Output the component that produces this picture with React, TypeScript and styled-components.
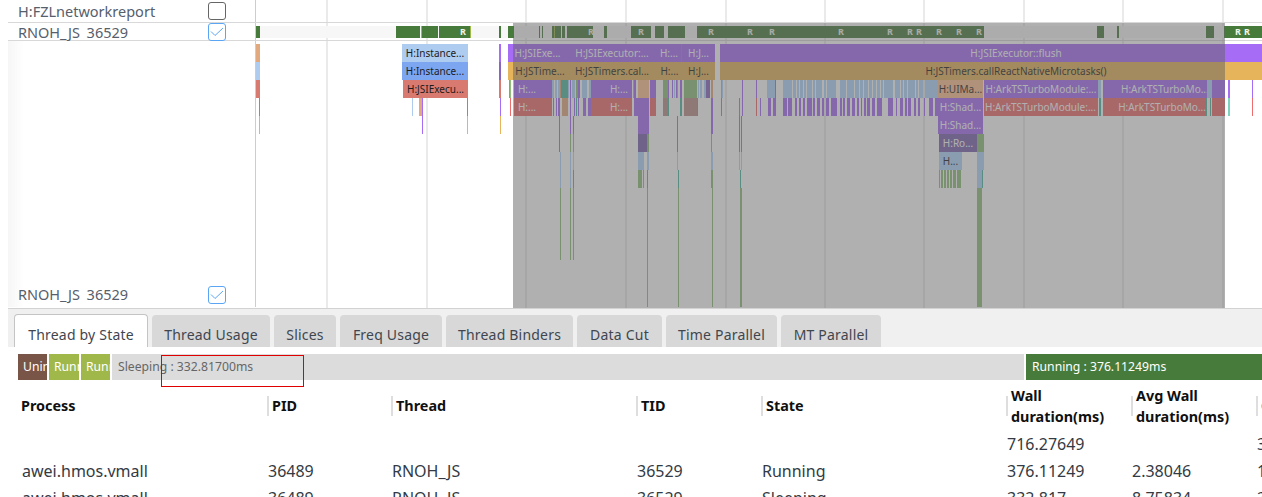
import React from "react";
import styled, { createGlobalStyle } from "styled-components";

const ORIGIN = 256;

const PURPLE = "#a66cf5";
const AMBER = "#e6b45a";
const SKY = "#aecbf0";
const BLUE = "#7ca6f0";
const RED = "#d97a70";
const ROSE = "#ee6c6c";
const PEACH = "#e2a97e";
const GREEN = "#8fbf78";
const TEAL = "#4fb8a0";
const MINT = "#7cd4bc";
const STEEL = "#b1d8ff";
const INDIGO = "#8a64c0";
const MOSS = "#b98f8a";

// [x, width, colour, text, text colour, height]
type Item = [number, number, string, string?, string?, number?];

const W = "#ffffff";
const K = "#1c1c1c";

const threadSegs: [number, number, string][] = [
  [256, 4, "#477b3b"], [396, 24, "#477b3b"], [421, 1, "#9fb84a"], [422, 16, "#477b3b"], [439, 31, "#477b3b"],
  [470, 1, "#9fb84a"], [499, 2, "#477b3b"], [508, 6, "#477b3b"], [539, 1, "#477b3b"], [542, 1, "#477b3b"],
  [552, 2, "#477b3b"], [554, 1, "#9fb84a"], [555, 6, "#477b3b"], [562, 3, "#477b3b"], [567, 26, "#477b3b"],
  [604, 3, "#477b3b"], [631, 20, "#477b3b"], [655, 9, "#477b3b"], [668, 17, "#477b3b"], [697, 287, "#477b3b"],
  [1097, 7, "#477b3b"], [1117, 2, "#477b3b"], [1206, 8, "#477b3b"], [1224, 38, "#477b3b"],
];
const threadMarks = [460, 588, 638, 708, 747, 769, 838, 887, 907, 916, 936, 956, 976, 1235, 1244];

const lanes: Item[][] = [
  [
    [256, 4, PEACH], [402, 66, SKY, "H:Instance...", K], [499, 2, PURPLE],
    [508, 59, PURPLE, "H:JSIExe...", W], [567, 90, PURPLE, "H:JSIExecutor:...", W], [657, 24, PURPLE, "H:...", W],
    [681, 1, TEAL], [682, 33, PURPLE, "H:J...", W], [720, 592, PURPLE, "H:JSIExecutor::flush", W],
  ],
  [
    [256, 4, SKY], [402, 66, BLUE, "H:Instance...", K], [499, 2, INDIGO], [508, 5, AMBER],
    [513, 54, AMBER, "H:JSTime...", K], [567, 90, AMBER, "H:JSTimers.cal...", K], [657, 25, AMBER, "H:...", K],
    [682, 33, AMBER, "H:J...", K], [720, 592, AMBER, "H:JSTimers.callReactNativeMicrotasks()", K],
  ],
  [
    [256, 4, RED], [403, 65, RED, "H:JSIExecu...", K], [499, 2, RED], [509, 1, TEAL], [510, 1, GREEN],
    [514, 26, PURPLE, "H:...", W], [540, 12, PURPLE], [552, 2, STEEL], [555, 2, STEEL], [558, 2, STEEL], [560, 1, PEACH],
    [561, 7, TEAL], [568, 1, STEEL], [570, 1, PURPLE], [572, 3, STEEL], [576, 2, GREEN], [578, 2, PURPLE],
    [582, 5, STEEL], [589, 2, STEEL], [591, 15, PURPLE], [606, 26, PURPLE, "H:...", W], [633, 1, PEACH],
    [634, 2, PURPLE], [638, 11, "#ffc091"], [650, 6, PURPLE], [663, 5, GREEN], [668, 1, PURPLE], [672, 1, PURPLE],
    [674, 1, STEEL], [676, 1, PURPLE], [677, 1, PEACH], [680, 2, PURPLE], [684, 13, GREEN], [698, 1, STEEL],
    [700, 2, STEEL], [704, 2, STEEL], [706, 4, INDIGO], [711, 2, PEACH], [721, 1, PEACH], [722, 1, STEEL], [742, 1, PURPLE], [756, 1, PURPLE],
    [767, 8, STEEL], [775, 1, PURPLE], [783, 9, STEEL], [793, 3, STEEL], [797, 2, STEEL], [800, 3, STEEL], [804, 2, STEEL],
    [807, 5, STEEL], [813, 2, STEEL], [816, 6, STEEL], [824, 2, STEEL], [827, 9, STEEL], [840, 6, STEEL], [847, 7, STEEL],
    [855, 4, STEEL], [860, 3, STEEL], [864, 4, STEEL], [869, 3, STEEL], [873, 3, STEEL], [877, 3, STEEL], [881, 2, STEEL],
    [884, 9, STEEL], [895, 5, STEEL], [901, 2, STEEL], [904, 3, STEEL], [908, 7, STEEL], [916, 2, STEEL], [919, 4, STEEL],
    [925, 13, STEEL], [938, 45, "#ffc091", "H:UIMa...", K], [984, 114, PURPLE, "H:ArkTSTurboModule:...", W],
    [1098, 3, STEEL], [1103, 18, PURPLE], [1121, 86, PURPLE, "H:ArkTSTurboMo...", W], [1207, 5, STEEL], [1212, 13, PURPLE],
    [1228, 2, PURPLE], [1252, 1, PURPLE],
  ],
  [
    [259, 1, PURPLE], [412, 1, SKY], [419, 3, PEACH], [422, 1, PURPLE], [467, 1, PURPLE], [500, 1, PURPLE], [510, 1, ROSE],
    [514, 26, ROSE, "H:...", W], [540, 12, ROSE], [553, 1, PURPLE], [556, 1, PURPLE], [558, 2, PURPLE], [562, 6, PEACH],
    [570, 1, PURPLE], [574, 1, PURPLE], [576, 1, TEAL], [578, 1, PURPLE], [583, 3, PURPLE], [588, 3, PURPLE],
    [591, 15, ROSE], [606, 26, ROSE, "H:...", W], [634, 15, PURPLE], [650, 6, ROSE], [663, 5, MOSS], [668, 1, TEAL],
    [680, 2, TEAL], [684, 13, MOSS], [697, 1, TEAL], [711, 2, PURPLE], [721, 1, ROSE], [739, 1, TEAL], [742, 1, PURPLE],
    [756, 1, ROSE], [760, 1, PURPLE], [768, 3, PURPLE], [773, 3, PURPLE], [783, 4, PURPLE], [788, 4, PURPLE], [795, 2, PURPLE],
    [799, 2, PURPLE], [803, 2, PURPLE], [807, 5, PURPLE], [813, 2, PURPLE], [817, 3, PURPLE], [822, 2, PURPLE], [826, 3, PURPLE],
    [831, 6, PURPLE], [840, 2, PURPLE], [843, 2, PURPLE], [847, 3, PURPLE], [852, 3, PURPLE], [857, 2, PURPLE], [861, 1, PURPLE],
    [864, 2, PURPLE], [867, 3, PURPLE], [872, 3, PURPLE], [877, 5, PURPLE], [888, 5, PURPLE], [896, 1, PURPLE], [900, 3, PURPLE],
    [905, 2, PURPLE], [908, 3, PURPLE], [914, 2, PURPLE], [918, 2, PURPLE], [924, 1, PURPLE], [929, 4, PURPLE], [935, 3, PURPLE],
    [938, 45, PURPLE, "H:Shad...", W], [984, 113, ROSE, "H:ArkTSTurboModule:...", W], [1097, 1, TEAL], [1099, 2, TEAL],
    [1103, 14, ROSE], [1117, 1, TEAL], [1118, 88, ROSE, "H:ArkTSTurboMo...", W], [1206, 1, TEAL], [1210, 1, TEAL], [1212, 13, ROSE],
    [1228, 2, MINT], [1252, 1, ROSE],
  ],
  [
    [259, 1, AMBER], [422, 1, PURPLE], [467, 1, AMBER], [500, 1, AMBER],
    [559, 1, PURPLE], [570, 1, PURPLE], [573, 1, PURPLE], [638, 11, PURPLE], [677, 1, PURPLE], [711, 2, PURPLE],
    [739, 1, PURPLE], [741, 1, PURPLE], [938, 45, PURPLE, "H:Shad...", W],
  ],
  [
    [559, 1, PURPLE], [570, 1, GREEN], [573, 1, GREEN], [638, 9, "#7c62b0"], [647, 2, GREEN], [677, 1, PURPLE], [711, 1, GREEN],
    [739, 1, PURPLE], [741, 1, PURPLE], [939, 38, "#7c62b0", "H:Ro...", W], [977, 7, GREEN],
  ],
  [
    [560, 1, STEEL], [570, 1, STEEL], [573, 1, STEEL], [638, 6, STEEL], [647, 2, STEEL], [677, 1, STEEL], [711, 2, STEEL],
    [739, 1, STEEL], [741, 1, STEEL], [939, 23, STEEL, "H...", K], [977, 7, STEEL],
  ],
  [
    [560, 1, STEEL], [570, 1, STEEL], [573, 1, TEAL], [638, 4, GREEN], [643, 1, GREEN], [647, 1, TEAL], [678, 1, TEAL], [711, 2, GREEN],
    [740, 1, TEAL], [939, 1, GREEN], [941, 2, GREEN], [944, 2, GREEN], [947, 2, GREEN], [950, 2, GREEN], [953, 3, GREEN],
    [957, 4, GREEN], [977, 5, STEEL], [982, 1, TEAL],
  ],
  [
    [560, 1, GREEN, "", "", 72], [570, 1, GREEN, "", "", 72], [573, 1, GREEN, "", "", 72],
    [647, 1, GREEN], [678, 1, GREEN], [712, 1, GREEN], [740, 2, GREEN], [977, 5, GREEN],
  ],
];

const gridLines = [326, 426, 525, 625, 725, 824, 923, 1023, 1122, 1222];

const tabs: [string, number][] = [
  ["Thread by State", 134], ["Thread Usage", 118], ["Slices", 62], ["Freq Usage", 102],
  ["Thread Binders", 127], ["Data Cut", 85], ["Time Parallel", 111], ["MT Parallel", 100],
];

const columns = "247px 124px 245px 125px 245px 125px 125px 60px";
const headers = ["Process", "PID", "Thread", "TID", "State", "Wall duration(ms)", "Avg Wall duration(ms)", "CPU"];
const rows = [
  ["", "", "", "", "", "716.27649", "", "376"],
  ["awei.hmos.vmall", "36489", "RNOH_JS", "36529", "Running", "376.11249", "2.38046", "158"],
  ["awei.hmos.vmall", "36489", "RNOH_JS", "36529", "Sleeping", "332.817", "8.75834", "38"],
];

const GlobalStyle = createGlobalStyle`
  html, body {
    margin: 0;
    height: 497px;
    overflow: hidden;
    background: #fff;
    font-family: "Noto Sans", "Open Sans", sans-serif;
  }
`;

const Page = styled.div`
  width: 1262px;
  height: 497px;
  overflow: hidden;
  display: flex;
  flex-direction: column;
`;

const TrackArea = styled.section`
  position: relative;
  height: 308px;
  margin-left: 8px;
  display: flex;
  flex-direction: column;
  overflow: hidden;
`;

const GridLine = styled.i`
  position: absolute;
  top: 0;
  bottom: 0;
  width: 2px;
  background: #eaeaea;
`;

const TrackRow = styled.div<{ $h: number; $end?: boolean }>`
  position: relative;
  display: flex;
  flex: none;
  height: ${(p) => p.$h}px;
  border-bottom: 1px solid ${(p) => (p.$end ? "transparent" : "#d8d8d8")};
  box-sizing: border-box;
`;

const LabelCell = styled.div<{ $end?: boolean }>`
  flex: none;
  width: 248px;
  box-sizing: border-box;
  padding: 0 29px 0 10px;
  display: flex;
  justify-content: space-between;
  align-items: ${(p) => (p.$end ? "flex-end" : "center")};
  padding-bottom: ${(p) => (p.$end ? "3px" : "0")};
  border-right: 1px solid #c9cdd8;
  color: #56606c;
  font-size: 14.5px;
  word-spacing: 3px;
  background: ${(p) => (p.$end ? "linear-gradient(90deg, #f6f6f6, #fff 16px)" : "transparent")};
`;

const CheckBox = styled.span<{ $on?: boolean }>`
  width: 18px;
  height: 18px;
  box-sizing: border-box;
  border: 1px solid ${(p) => (p.$on ? "#5aa6f5" : "#666")};
  border-radius: 3px;
  display: flex;
  align-items: center;
  justify-content: center;
  background: #fff;
`;

const TimelineCell = styled.div`
  position: relative;
  flex: 1;
  min-width: 0;
`;

const ThreadTrack = styled.div`
  position: absolute;
  left: 0;
  right: 0;
  top: 3px;
  height: 12px;
  background: #f7f7f7;
`;

const ThreadSeg = styled.i`
  position: absolute;
  top: 0;
  bottom: 0;
`;

const ThreadMark = styled.b`
  position: absolute;
  top: 0;
  line-height: 12px;
  font-size: 9px;
  font-style: normal;
  color: #eef4ea;
`;

const LaneStack = styled.div`
  display: flex;
  flex-direction: column;
  height: 100%;
  padding-top: 3px;
  box-sizing: border-box;
`;

const Lane = styled.div<{ $fill?: boolean }>`
  position: relative;
  flex: ${(p) => (p.$fill ? "1" : "none")};
  height: 18px;
`;

const Slice = styled.span`
  position: absolute;
  top: 0;
  height: 100%;
  overflow: hidden;
  white-space: nowrap;
  text-align: center;
  font-size: 10px;
  line-height: 18px;
`;

const Selection = styled.div`
  position: absolute;
  left: 505px;
  width: 712px;
  top: 23px;
  bottom: 0;
  background: rgba(100, 100, 100, 0.51);
`;

const TabBar = styled.nav`
  flex: none;
  height: 39px;
  margin-left: 8px;
  box-sizing: border-box;
  border-top: 1px solid #d2d2d2;
  background: #f0f0f0;
  padding: 5px 0 0 6px;
  display: flex;
  align-items: flex-end;
  gap: 4px;
`;

const Tab = styled.div<{ $active?: boolean; $w: number }>`
  flex: none;
  width: ${(p) => p.$w}px;
  height: ${(p) => (p.$active ? "33px" : "32px")};
  box-sizing: border-box;
  display: flex;
  align-items: center;
  justify-content: center;
  padding-top: 6px;
  font-size: 14px;
  letter-spacing: 0.2px;
  color: #3f4650;
  border-radius: 4px 4px 0 0;
  background: ${(p) => (p.$active ? "#fff" : "#d8d8d8")};
  border: ${(p) => (p.$active ? "1px solid #c4c4c4" : "1px solid #d8d8d8")};
  border-bottom: none;
`;

const Panel = styled.section`
  position: relative;
  flex: 1;
  margin-left: 8px;
  min-height: 0;
  padding: 7px 0 0 10px;
`;

const StateBar = styled.div`
  display: flex;
  gap: 2px;
  height: 26px;
  width: 1300px;
`;

const StateChip = styled.div<{ $bg: string; $fg: string; $w: number }>`
  flex: none;
  width: ${(p) => p.$w}px;
  background: ${(p) => p.$bg};
  color: ${(p) => p.$fg};
  font-size: 12.2px;
  line-height: 26px;
  padding-left: 5px;
  box-sizing: border-box;
  overflow: hidden;
  white-space: nowrap;

  &:nth-child(n + 4) {
    padding-left: 6px;
  }
`;

const RedBox = styled.div`
  position: absolute;
  left: 153px;
  top: 8px;
  width: 143px;
  height: 32px;
  box-sizing: border-box;
  border: 1px solid #e00000;
`;

const TableRow = styled.div<{ $head?: boolean }>`
  display: grid;
  grid-template-columns: ${columns};
  margin-left: 2px;
  width: 1300px;
  height: ${(p) => (p.$head ? "51px" : "27px")};
`;

const HeadCell = styled.div<{ $first?: boolean }>`
  display: flex;
  align-items: center;
  gap: 3px;
  padding-left: ${(p) => (p.$first ? "1px" : "0")};
  font-size: 14.4px;
  font-weight: 700;
  line-height: 21px;
  color: #101010;
  box-sizing: border-box;
  padding-right: 14px;

  &::before {
    content: "";
    display: ${(p) => (p.$first ? "none" : "block")};
    flex: none;
    width: 2px;
    height: 20px;
    background: #dedede;
  }
`;

const DataCell = styled.div`
  font-size: 16px;
  line-height: 27px;
  color: #333a44;
  padding-left: 1px;
  white-space: nowrap;

  &:first-child {
    padding-left: 2px;
  }
`;

const Check = () => (
  <svg width="14" height="10" viewBox="0 0 14 10" fill="none">
    <polyline points="1,4.5 5,8.5 13,1" stroke="#5aa6f5" strokeWidth="1" />
  </svg>
);

const renderItem = ([x, w, bg, text, fg, h]: Item, i: number) => (
  <Slice key={i} style={{ left: x - ORIGIN, width: w, background: bg, color: fg, height: h }}>
    {text}
  </Slice>
);

export default function App() {
  return (
    <Page>
      <GlobalStyle />
      <TrackArea>
        {gridLines.map((x) => (
          <GridLine key={x} style={{ left: x - 8 }} />
        ))}
        <TrackRow $h={23}>
          <LabelCell>
            H:FZLnetworkreport
            <CheckBox />
          </LabelCell>
          <TimelineCell />
        </TrackRow>
        <TrackRow $h={18}>
          <LabelCell>
            RNOH_JS 36529
            <CheckBox $on>
              <Check />
            </CheckBox>
          </LabelCell>
          <TimelineCell>
            <ThreadTrack>
              {threadSegs.map(([x, w, bg], i) => (
                <ThreadSeg key={i} style={{ left: x - ORIGIN, width: w, background: bg }} />
              ))}
              {threadMarks.map((x) => (
                <ThreadMark key={x} style={{ left: x - ORIGIN }}>
                  R
                </ThreadMark>
              ))}
            </ThreadTrack>
          </TimelineCell>
        </TrackRow>
        <TrackRow $h={267} $end>
          <LabelCell $end>
            RNOH_JS 36529
            <CheckBox $on>
              <Check />
            </CheckBox>
          </LabelCell>
          <TimelineCell>
            <LaneStack>
              {lanes.map((items, i) => (
                <Lane key={i} $fill={i === lanes.length - 1}>
                  {items.map(renderItem)}
                </Lane>
              ))}
            </LaneStack>
          </TimelineCell>
        </TrackRow>
        <Selection />
      </TrackArea>

      <TabBar>
        {tabs.map(([t, w], i) => (
          <Tab key={t} $w={w} $active={i === 0}>
            {t}
          </Tab>
        ))}
      </TabBar>

      <Panel>
        <StateBar>
          <StateChip $bg="#795548" $fg="#fff" $w={29}>Uninterruptible</StateChip>
          <StateChip $bg="#a0b84a" $fg="#fff" $w={30}>Runnable</StateChip>
          <StateChip $bg="#a0b84a" $fg="#fff" $w={29}>Runnable</StateChip>
          <StateChip $bg="#dcdcdc" $fg="#666" $w={912}>Sleeping : 332.81700ms</StateChip>
          <StateChip $bg="#477b3b" $fg="#fff" $w={236}>Running : 376.11249ms</StateChip>
        </StateBar>
        <RedBox />
        <TableRow $head>
          {headers.map((h, i) => (
            <HeadCell key={h} $first={i === 0}>
              <span>{h}</span>
            </HeadCell>
          ))}
        </TableRow>
        {rows.map((row, r) => (
          <TableRow key={r}>
            {row.map((v, c) => (
              <DataCell key={c}>{v}</DataCell>
            ))}
          </TableRow>
        ))}
      </Panel>
    </Page>
  );
}
